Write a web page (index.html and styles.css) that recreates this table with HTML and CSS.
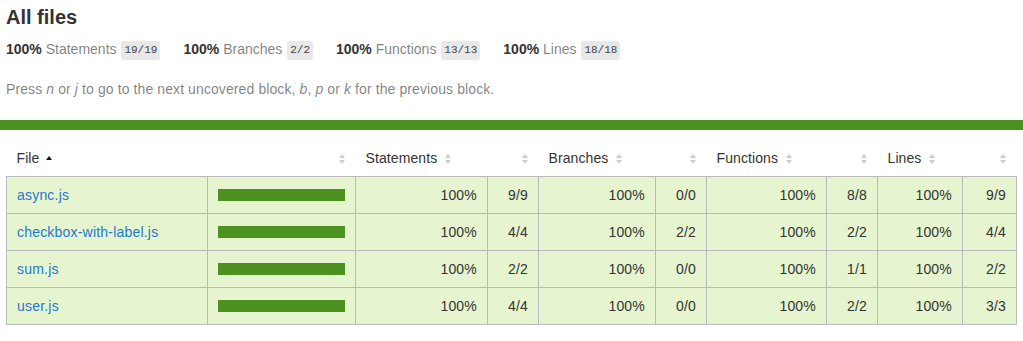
FILE: index.html
```html
<!DOCTYPE html>
<html>
<head>
<meta charset="utf-8">
<title>Code coverage report for All files</title>
<link rel="stylesheet" href="styles.css">
</head>
<body>
<div class="wrapper">
  <div class="head">
    <h1>All files</h1>
    <div class="summary">
      <div class="stat"><span class="strong">100%</span> <span class="quiet">Statements</span> <span class="fraction">19/19</span></div>
      <div class="stat"><span class="strong">100%</span> <span class="quiet">Branches</span> <span class="fraction">2/2</span></div>
      <div class="stat"><span class="strong">100%</span> <span class="quiet">Functions</span> <span class="fraction">13/13</span></div>
      <div class="stat"><span class="strong">100%</span> <span class="quiet">Lines</span> <span class="fraction">18/18</span></div>
    </div>
    <p class="quiet hint">Press <em>n</em> or <em>j</em> to go to the next uncovered block, <em>b</em>, <em>p</em> or <em>k</em> for the previous block.</p>
  </div>
  <div class="status-line"></div>
  <div class="body-pad">
    <table class="coverage-summary">
      <colgroup>
        <col class="c-file"><col class="c-pic"><col class="c-pct1"><col class="c-abs"><col class="c-pct2"><col class="c-abs"><col class="c-pct3"><col class="c-abs"><col class="c-pct4"><col class="c-abs4">
      </colgroup>
      <thead>
        <tr>
          <th class="file">File <span class="sorted-asc"></span></th>
          <th class="pic"><span class="sorter"></span></th>
          <th class="pct">Statements <span class="sorter"></span></th>
          <th class="abs"><span class="sorter"></span></th>
          <th class="pct">Branches <span class="sorter"></span></th>
          <th class="abs"><span class="sorter"></span></th>
          <th class="pct">Functions <span class="sorter"></span></th>
          <th class="abs"><span class="sorter"></span></th>
          <th class="pct">Lines <span class="sorter"></span></th>
          <th class="abs"><span class="sorter"></span></th>
        </tr>
      </thead>
      <tbody>
        <tr>
          <td class="file high"><a href="#">async.js</a></td>
          <td class="pic high"><div class="chart"><div class="cover-fill"></div></div></td>
          <td class="pct high">100%</td><td class="abs high">9/9</td>
          <td class="pct high">100%</td><td class="abs high">0/0</td>
          <td class="pct high">100%</td><td class="abs high">8/8</td>
          <td class="pct high">100%</td><td class="abs high">9/9</td>
        </tr>
        <tr>
          <td class="file high"><a href="#">checkbox-with-label.js</a></td>
          <td class="pic high"><div class="chart"><div class="cover-fill"></div></div></td>
          <td class="pct high">100%</td><td class="abs high">4/4</td>
          <td class="pct high">100%</td><td class="abs high">2/2</td>
          <td class="pct high">100%</td><td class="abs high">2/2</td>
          <td class="pct high">100%</td><td class="abs high">4/4</td>
        </tr>
        <tr>
          <td class="file high"><a href="#">sum.js</a></td>
          <td class="pic high"><div class="chart"><div class="cover-fill"></div></div></td>
          <td class="pct high">100%</td><td class="abs high">2/2</td>
          <td class="pct high">100%</td><td class="abs high">0/0</td>
          <td class="pct high">100%</td><td class="abs high">1/1</td>
          <td class="pct high">100%</td><td class="abs high">2/2</td>
        </tr>
        <tr>
          <td class="file high"><a href="#">user.js</a></td>
          <td class="pic high"><div class="chart"><div class="cover-fill"></div></div></td>
          <td class="pct high">100%</td><td class="abs high">4/4</td>
          <td class="pct high">100%</td><td class="abs high">0/0</td>
          <td class="pct high">100%</td><td class="abs high">2/2</td>
          <td class="pct high">100%</td><td class="abs high">3/3</td>
        </tr>
      </tbody>
    </table>
  </div>
</div>
</body>
</html>
```

FILE: styles.css
```css
html, body { margin: 0; padding: 0; }
body {
  font-family: "Liberation Sans", Arial, Helvetica, sans-serif;
  font-size: 14px;
  color: #333;
  background: #fff;
}
.head { padding: 5px 7px 0 6px; }
h1 {
  font-size: 20px;
  font-weight: bold;
  margin: 0;
  line-height: 24px;
  color: #333;
}
.summary {
  display: flex;
  align-items: center;
  padding: 11px 0 10px;
}
.stat { margin-right: 23px; white-space: nowrap; line-height: 19px; }
.strong { font-weight: bold; }
.quiet { color: rgba(0,0,0,0.5); }
.fraction {
  display: inline-block;
  font-family: "Liberation Mono", "DejaVu Sans Mono", monospace;
  font-size: 11px;
  line-height: 13px;
  color: #444;
  background: #e8e8e8;
  padding: 3px 3px;
  border-radius: 3px;
  vertical-align: middle;
  margin-left: 1px;
}
.hint {
  margin: 9px 0 0;
  line-height: 20px;
  font-size: 14px;
  letter-spacing: 0.1px;
  height: 41px;
}
.hint em { font-style: italic; }
.status-line { height: 10px; background: #4d9221; }
.body-pad { padding: 10px 7px 10px 6px; }
.coverage-summary {
  border-collapse: collapse;
  table-layout: fixed;
  width: 1010px;
}
.c-file { width: 201px; }
.c-pic { width: 148px; }
.c-pct1 { width: 132px; }
.c-abs { width: 51px; }
.c-pct2 { width: 117px; }
.c-pct3 { width: 120px; }
.c-pct4 { width: 85px; }
.c-abs4 { width: 54px; }
.coverage-summary th {
  font-weight: normal;
  text-align: left;
  white-space: nowrap;
  padding: 10px 10px;
  line-height: 16px;
  font-size: 14px;
  letter-spacing: 0.1px;
  color: #333;
}
.coverage-summary th.pic, .coverage-summary th.abs { text-align: right; }
.coverage-summary td {
  border: 1px solid #bbb;
  padding: 10px 10px;
  line-height: 16px;
  font-size: 14px;
  letter-spacing: 0.2px;
  white-space: nowrap;
}
.coverage-summary td.pct, .coverage-summary td.abs { text-align: right; }
.high { background: #e6f5d0; }
.coverage-summary a { color: #1f78d1; text-decoration: none; }
.chart { display: flex; align-items: center; height: 16px; }
.cover-fill { width: 127px; height: 12px; background: #4d9221; }
.sorter {
  display: inline-block;
  width: 7px;
  height: 10px;
  margin-left: 4px;
  vertical-align: -1px;
  position: relative;
}
.sorter::before, .sorter::after {
  content: "";
  position: absolute;
  left: 0;
  border-left: 3.5px solid transparent;
  border-right: 3.5px solid transparent;
}
.sorter::before { top: 0; border-bottom: 4px solid #ccc; }
.sorter::after { bottom: 0; border-top: 4px solid #ccc; }
.sorted-asc {
  display: inline-block;
  width: 0;
  height: 0;
  margin-left: 3px;
  border-left: 3.5px solid transparent;
  border-right: 3.5px solid transparent;
  border-bottom: 4px solid #111;
  vertical-align: 3px;
}
```
